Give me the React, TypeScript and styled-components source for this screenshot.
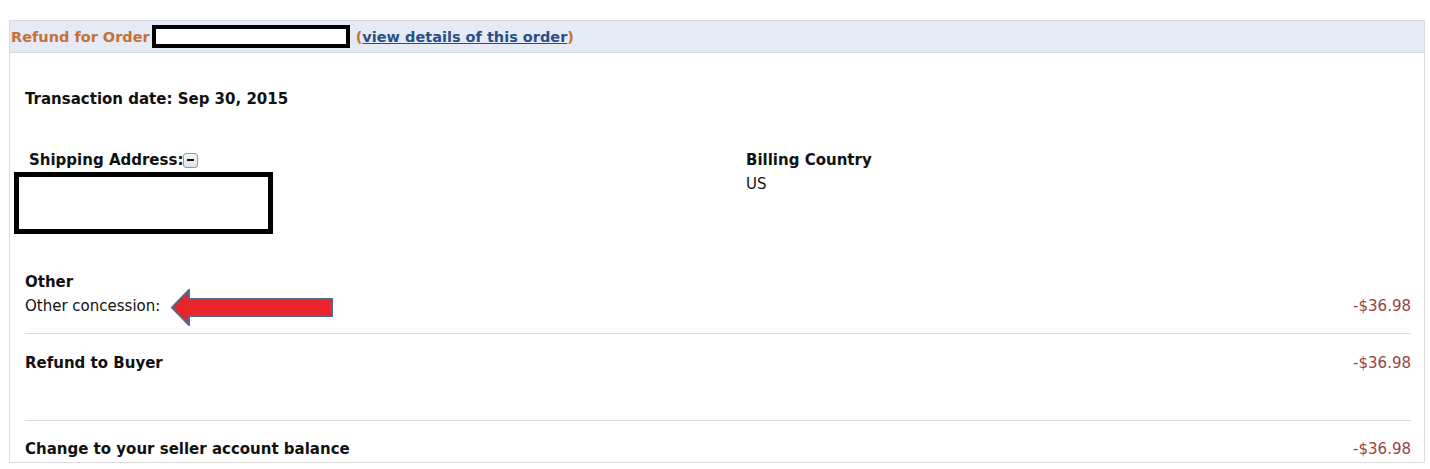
import React from 'react'
import styled, { createGlobalStyle } from 'styled-components'

const GlobalStyle = createGlobalStyle`
  body {
    margin: 0;
    background: #ffffff;
    font-family: 'DejaVu Sans', Verdana, sans-serif;
    font-size: 15px;
    color: #111111;
  }
`

type Line = {
  label: string
  amount: string
}

export default function App() {
  return (
    <>
      <GlobalStyle />
      <StyledPage>
        <StyledPanel>
          <StyledHeader>
            <StyledHeaderTitle>Refund for Order</StyledHeaderTitle>
            <StyledRedaction $width={198} $height={23} $border={4} $offset={2} />
            <StyledHeaderParen>
              (<StyledLink href="#">view details of this order</StyledLink>)
            </StyledHeaderParen>
          </StyledHeader>
          <StyledBody>
            <StyledTransactionDate>Transaction date: Sep 30, 2015</StyledTransactionDate>
            <StyledAddressGrid>
              <div>
                <StyledShippingLabel>
                  Shipping Address:
                  <StyledToggle aria-label="collapse">
                    <StyledToggleDash />
                  </StyledToggle>
                </StyledShippingLabel>
                <StyledRedaction $width={259} $height={62} $border={5} $offset={-11} $block />
              </div>
              <div>
                <StyledBoldLine>Billing Country</StyledBoldLine>
                <StyledCountry>US</StyledCountry>
              </div>
            </StyledAddressGrid>
            <StyledSection>
              <StyledBoldLine>Other</StyledBoldLine>
              <StyledAmountRow $gap={8}>
                <StyledAnnotated>
                  Other concession:
                  <StyledArrow width="162" height="37" viewBox="0 0 162 37">
                    <polygon
                      points="1,18.5 18,1 18,10 161,10 161,27 18,27 18,36"
                      fill="#e8252b"
                      stroke="#52698c"
                      strokeWidth="2"
                    />
                  </StyledArrow>
                </StyledAnnotated>
                <StyledAmount>-$36.98</StyledAmount>
              </StyledAmountRow>
            </StyledSection>
            <StyledDivider $top={19} />
            <StyledAmountRow $gap={21}>
              <StyledBoldLine>Refund to Buyer</StyledBoldLine>
              <StyledAmount>-$36.98</StyledAmount>
            </StyledAmountRow>
            <StyledDivider $top={49} />
            {totals.map((line) => (
              <StyledAmountRow key={line.label} $gap={20}>
                <StyledBoldLine>{line.label}</StyledBoldLine>
                <StyledAmount>{line.amount}</StyledAmount>
              </StyledAmountRow>
            ))}
          </StyledBody>
        </StyledPanel>
      </StyledPage>
    </>
  )
}

const totals: Line[] = [{ label: 'Change to your seller account balance', amount: '-$36.98' }]

const StyledPage = styled('div')`
  padding: 20px 0 0 9px;
  width: 1416px;
`

const StyledPanel = styled('div')`
  border: 1px solid #dcdcdc;
  border-top-color: #d8dbe2;
`

const StyledHeader = styled('div')`
  display: flex;
  align-items: center;
  height: 31px;
  padding-left: 1px;
  background: #e6eaf4;
  border-bottom: 1px solid #d9dce3;
  font-size: 14.5px;
  font-weight: bold;
`

const StyledHeaderTitle = styled('span')`
  color: #c4713a;
`

const StyledHeaderParen = styled('span')`
  color: #c4713a;
  margin-left: 6px;
`

const StyledLink = styled('a')`
  color: #2a4f86;
  text-decoration: underline;
`

const StyledRedaction = styled('div')<{
  $width: number
  $height: number
  $border: number
  $offset: number
  $block?: boolean
}>`
  display: ${(p) => (p.$block ? 'block' : 'inline-block')};
  box-sizing: border-box;
  width: ${(p) => p.$width}px;
  height: ${(p) => p.$height}px;
  border: ${(p) => p.$border}px solid #000000;
  background: #ffffff;
  margin-left: ${(p) => p.$offset}px;
  margin-top: ${(p) => (p.$block ? 4 : 0)}px;
`

const StyledBody = styled('div')`
  padding: 0 13px 5px 15px;
`

const StyledBoldLine = styled('div')`
  font-weight: bold;
  line-height: 16px;
`

const StyledTransactionDate = styled(StyledBoldLine)`
  margin-top: 38px;
`

const StyledAddressGrid = styled('div')`
  display: grid;
  grid-template-columns: 721px 1fr;
  margin-top: 45px;
`

const StyledShippingLabel = styled('div')`
  display: flex;
  align-items: center;
  height: 16px;
  padding-left: 4px;
  font-weight: bold;
  line-height: 16px;
`

const StyledToggle = styled('span')`
  display: inline-flex;
  align-items: center;
  justify-content: center;
  box-sizing: border-box;
  width: 15px;
  height: 15px;
  margin-left: 0;
  border: 1px solid #8d9bb0;
  border-radius: 3px;
  background: linear-gradient(#f4f6fa, #dfe5ee);
`

const StyledToggleDash = styled('span')`
  width: 7px;
  height: 2px;
  background: #111111;
`

const StyledCountry = styled('div')`
  margin-top: 8px;
  line-height: 16px;
`

const StyledSection = styled('div')`
  margin-top: 40px;
`

const StyledAmountRow = styled('div')<{ $gap: number }>`
  display: flex;
  justify-content: space-between;
  align-items: center;
  margin-top: ${(p) => p.$gap}px;
  line-height: 16px;
`

const StyledAnnotated = styled('span')`
  position: relative;
`

const StyledArrow = styled('svg')`
  position: absolute;
  left: calc(100% + 11px);
  top: -9px;
`

const StyledAmount = styled('span')`
  color: #9a4242;
`

const StyledDivider = styled('div')<{ $top: number }>`
  margin-top: ${(p) => p.$top}px;
  border-top: 1px solid #dddddd;
`
